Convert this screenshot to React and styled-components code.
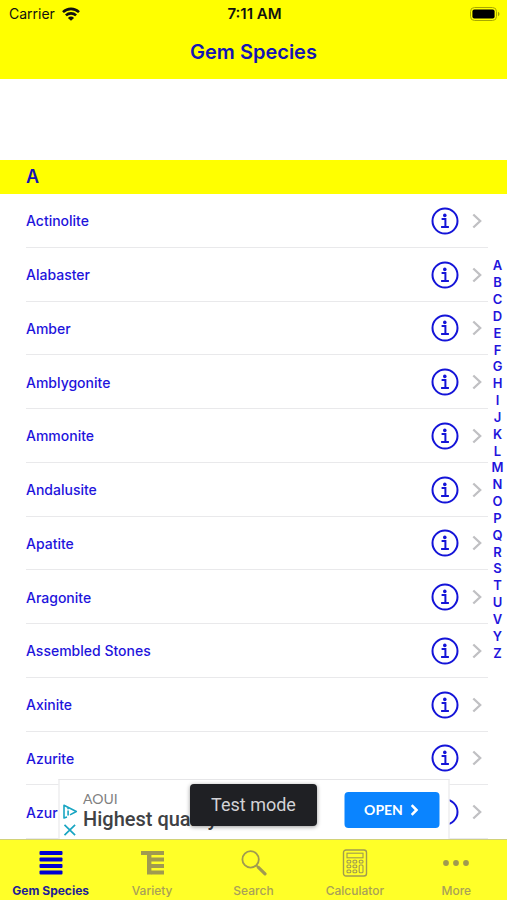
import React from 'react';
import styled, { createGlobalStyle } from 'styled-components';

const gems = [
  'Actinolite',
  'Alabaster',
  'Amber',
  'Amblygonite',
  'Ammonite',
  'Andalusite',
  'Apatite',
  'Aragonite',
  'Assembled Stones',
  'Axinite',
  'Azurite',
  'Azur',
];

const letters = 'ABCDEFGHIJKLMNOPQRSTUVYZ'.split('');

const WifiIcon = () => (
  <svg width="18" height="14" viewBox="0 0 18 14" fill="none" stroke="#111" strokeWidth="2.6">
    <path d="M1 5.1a11.6 11.6 0 0 1 16 0" />
    <path d="M3.9 8.4a7.4 7.4 0 0 1 10.2 0" />
    <path d="M9 13.8L5.9 10.9a4.5 4.5 0 0 1 6.2 0z" fill="#111" stroke="none" />
  </svg>
);

const BatteryIcon = () => (
  <svg width="30" height="14" viewBox="0 0 30 14">
    <rect x="0.5" y="0.5" width="26" height="13" rx="4" fill="none" stroke="#a8a800" />
    <rect x="2.4" y="2.4" width="22.2" height="9.2" rx="2" fill="#000" />
    <path d="M28 4.8c2 .8 2 3.6 0 4.4z" fill="#a0a000" />
  </svg>
);

const InfoIcon = () => (
  <svg width="28" height="28" viewBox="0 0 28 28" fill="none" stroke="#1414d8" strokeWidth="2">
    <circle cx="14" cy="14" r="12.5" />
    <circle cx="13.8" cy="8.4" r="1.8" fill="#1414d8" stroke="none" />
    <path d="M10.600 12.100h3.800v7.600M10.100 19.900h7.800" />
  </svg>
);

const ChevronIcon = () => (
  <svg width="10" height="16" viewBox="0 0 10 16" fill="none" stroke="#c0c0c3" strokeWidth="2.3">
    <path d="M1.3 1.5L8.2 8l-6.9 6.5" />
  </svg>
);

const ListIcon = () => (
  <svg width="26" height="26" viewBox="0 0 26 26" fill="currentColor">
    <rect x="1.500" y="1" width="23" height="4" rx="1" />
    <rect x="1.500" y="7.500" width="23" height="4" rx="1" />
    <rect x="1.500" y="14" width="23" height="4" rx="1" />
    <rect x="1.500" y="20.500" width="23" height="4" rx="1" />
  </svg>
);

const VarietyIcon = () => (
  <svg width="26" height="26" viewBox="0 0 26 26" fill="currentColor">
    <path d="M2 1h23v4H2zM8 5h4.400v19.500H8z" />
    <path d="M12 7.500h13v4H12zM12 14h13v4H12zM12 20.500h13v4H12z" />
  </svg>
);

const SearchIcon = () => (
  <svg width="26" height="26" viewBox="0 0 26 26" fill="none" stroke="currentColor">
    <circle cx="9.600" cy="9.400" r="8.200" strokeWidth="1.800" />
    <path d="M15.400 15.400l2 2" strokeWidth="1.800" />
    <path d="M17.400 17.400l6.600 6.400" strokeWidth="3.200" strokeLinecap="round" />
  </svg>
);

const CalculatorIcon = () => (
  <svg width="26" height="28" viewBox="0 0 26 28" fill="none" stroke="currentColor" strokeWidth="1.100">
    <rect x="1.500" y="1" width="23" height="26" rx="2.500" strokeWidth="1.400" />
    <rect x="5" y="4.200" width="16" height="4.600" />
    <rect x="5" y="11.200" width="3.800" height="2.800" rx="1" />
    <rect x="11" y="11.200" width="3.800" height="2.800" rx="1" />
    <rect x="17.200" y="11.200" width="3.800" height="2.800" rx="1" />
    <rect x="5" y="16" width="3.800" height="2.800" rx="1" />
    <rect x="11" y="16" width="3.800" height="2.800" rx="1" />
    <rect x="17.200" y="16" width="3.800" height="7.800" rx="1" />
    <rect x="5" y="21" width="3.800" height="2.800" rx="1" />
    <rect x="11" y="21" width="3.800" height="2.800" rx="1" />
  </svg>
);

const MoreIcon = () => (
  <svg width="28" height="26" viewBox="0 0 28 26" fill="currentColor">
    <circle cx="4" cy="13" r="2.900" />
    <circle cx="14" cy="13" r="2.900" />
    <circle cx="24" cy="13" r="2.900" />
  </svg>
);

const AdChoicesIcon = () => (
  <svg width="15" height="15" viewBox="0 0 15 15" fill="none" stroke="#18a5c2" strokeWidth="1.600">
    <path d="M4.500 13L1.500 14V1.200L13.800 7.500 7.500 10.900" strokeLinejoin="round" />
    <path d="M5.600 6.600v5M5.600 3.900v1.400" />
  </svg>
);

const CloseIcon = () => (
  <svg width="15" height="12" viewBox="0 0 15 12" stroke="#18a5c2" strokeWidth="1.700">
    <path d="M2 .8l10.600 10.400M12.600 .8L2 11.200" />
  </svg>
);

const OpenArrow = () => (
  <svg width="8" height="12" viewBox="0 0 8 12" fill="none" stroke="#fff" strokeWidth="2.600">
    <path d="M1.200 1.200L6 6l-4.800 4.800" />
  </svg>
);

const tabs = [
  { label: 'Gem Species', icon: ListIcon, active: true },
  { label: 'Variety', icon: VarietyIcon },
  { label: 'Search', icon: SearchIcon },
  { label: 'Calculator', icon: CalculatorIcon },
  { label: 'More', icon: MoreIcon },
];

const App = () => {
  return (
    <>
      <GlobalStyle />
      <Page>
        <Header>
          <StatusBar>
            <Carrier>
              Carrier
              <WifiIcon />
            </Carrier>
            <Time>7:11 AM</Time>
            <Battery>
              <BatteryIcon />
            </Battery>
          </StatusBar>
          <Title>Gem Species</Title>
        </Header>
        <Content>
          <SectionTitle>A</SectionTitle>
          <List>
            {gems.map((gem) => (
              <Row key={gem}>
                <GemLink href="#">{gem}</GemLink>
                <InfoButton aria-label={`About ${gem}`}>
                  <InfoIcon />
                </InfoButton>
                <ChevronIcon />
              </Row>
            ))}
          </List>
          <IndexBar>
            <IndexLetters>
              {letters.map((letter) => (
                <a key={letter} href="#">{letter}</a>
              ))}
            </IndexLetters>
          </IndexBar>
          <Ad>
            <AdMarks>
              <AdButton aria-label="Ad choices">
                <AdChoicesIcon />
              </AdButton>
              <AdButton aria-label="Close ad">
                <CloseIcon />
              </AdButton>
            </AdMarks>
            <AdText>
              <Advertiser>AOUI</Advertiser>
              <Headline>Highest quality</Headline>
            </AdText>
            <OpenButton>
              OPEN
              <OpenArrow />
            </OpenButton>
            <Toast>Test mode</Toast>
          </Ad>
        </Content>
        <TabBar>
          {tabs.map(({ label, icon: Icon, active }) => (
            <Tab key={label} href="#" $active={active}>
              <TabIcon>
                <Icon />
              </TabIcon>
              {label}
            </Tab>
          ))}
        </TabBar>
      </Page>
    </>
  );
};

const GlobalStyle = createGlobalStyle`
  * {
    box-sizing: border-box;
  }
  body {
    margin: 0;
    font-family: Inter, "Liberation Sans", sans-serif;
  }
  a {
    color: inherit;
    text-decoration: none;
  }
  button {
    padding: 0;
    border: none;
    background: none;
    cursor: pointer;
  }
  svg {
    display: block;
    flex-shrink: 0;
  }
`;

const Page = styled.div`
  display: flex;
  flex-direction: column;
  min-height: 100vh;
  background: #fff;
`;

const Header = styled.header`
  background: #ffff00;
  padding-bottom: 12px;
`;

const StatusBar = styled.div`
  display: grid;
  grid-template-columns: 1fr auto 1fr;
  align-items: center;
  height: 27px;
  padding: 0 7px 0 9px;
  font-size: 14px;
  color: #111;
`;

const Carrier = styled.div`
  display: flex;
  align-items: center;
  gap: 7px;
`;

const Time = styled.span`
  font-size: 15px;
  line-height: 18px;
  font-weight: 600;
`;

const Battery = styled.div`
  justify-self: end;
`;

const Title = styled.h1`
  margin: 0;
  padding-top: 10px;
  text-align: center;
  font-size: 20px;
  font-weight: 600;
  line-height: 30px;
  color: #1414b4;
`;

const Content = styled.main`
  position: relative;
  flex: 1;
  display: flex;
  flex-direction: column;
  padding-top: 81px;
`;

const SectionTitle = styled.h2`
  margin: 0;
  padding: 0 26px;
  background: #ffff00;
  font-size: 18px;
  font-weight: 600;
  line-height: 34px;
  color: #1414b4;
`;

const List = styled.ul`
  flex: 1;
  display: grid;
  grid-auto-rows: 1fr;
  margin: 0;
  padding: 0 19px 0 26px;
  list-style: none;
`;

const Row = styled.li`
  display: flex;
  align-items: center;
  min-height: 44px;
  padding: 1px 6px 0 0;
  border-bottom: 1px solid #e9e9eb;
`;

const GemLink = styled.a`
  flex: 1;
  font-size: 14px;
  font-weight: 500;
  color: #1e14dc;
`;

const InfoButton = styled.button`
  margin-right: 13px;
`;

/* floats over the list, centred between the header and the tabs */
const IndexBar = styled.nav`
  position: absolute;
  top: 0;
  right: 0;
  bottom: 0;
  width: 19px;
  display: flex;
  align-items: center;
  justify-content: center;
`;

const IndexLetters = styled.div`
  display: grid;
  grid-auto-rows: 1fr;
  height: 404px;
  align-items: center;
  text-align: center;
  font-size: 13px;
  font-weight: 600;
  line-height: 16px;
  color: #1e14dc;
`;

const Ad = styled.aside`
  position: absolute;
  left: 50%;
  bottom: 0;
  transform: translateX(-50%);
  display: flex;
  align-items: center;
  width: 391px;
  max-width: 100%;
  height: 60px;
  padding: 0 9px 0 3px;
  background: #fff;
  border: 1px solid #e6e6e8;
  border-bottom: none;
`;

const AdMarks = styled.div`
  display: flex;
  flex-direction: column;
  gap: 5px;
  padding-top: 20px;
`;

const AdButton = styled.button`
  display: block;
`;

const AdText = styled.div`
  flex: 1;
  padding-left: 6px;
  white-space: nowrap;
`;

const Advertiser = styled.div`
  font-family: Lato, sans-serif;
  font-size: 14px;
  line-height: 18px;
  color: #808080;
`;

const Headline = styled.div`
  font-family: Roboto, sans-serif;
  font-size: 20px;
  font-weight: 500;
  line-height: 22px;
  color: #404144;
`;

const OpenButton = styled.button`
  display: flex;
  align-items: center;
  justify-content: center;
  gap: 8px;
  width: 95px;
  height: 36px;
  border-radius: 4px;
  background: #0a84ff;
  font-family: Lato, sans-serif;
  font-size: 14px;
  font-weight: 700;
  color: #fff;
`;

const Toast = styled.div`
  position: absolute;
  left: 50%;
  bottom: 13px;
  transform: translateX(-50%);
  width: 127px;
  border-radius: 4px;
  background: #1f2024;
  box-shadow: 0 1px 4px rgba(0, 0, 0, 0.4);
  text-align: center;
  font-family: Roboto, sans-serif;
  font-size: 18px;
  line-height: 42px;
  color: #d2d2d6;
`;

const TabBar = styled.nav`
  display: flex;
  height: 61px;
  border-top: 1px solid #d2d278;
  background: #ffff28;
`;

const Tab = styled.a`
  flex: 1;
  display: flex;
  flex-direction: column;
  align-items: center;
  padding-top: 9px;
  font-size: 12px;
  font-weight: ${(props) => (props.$active ? 700 : 500)};
  line-height: 16px;
  white-space: nowrap;
  color: ${(props) => (props.$active ? '#1e1e96' : '#a8a058')};

  svg {
    color: ${(props) => (props.$active ? '#0000d2' : '#a09a50')};
  }
`;

const TabIcon = styled.span`
  display: flex;
  align-items: center;
  height: 28px;
  margin-bottom: 6px;
`;

export default App;
